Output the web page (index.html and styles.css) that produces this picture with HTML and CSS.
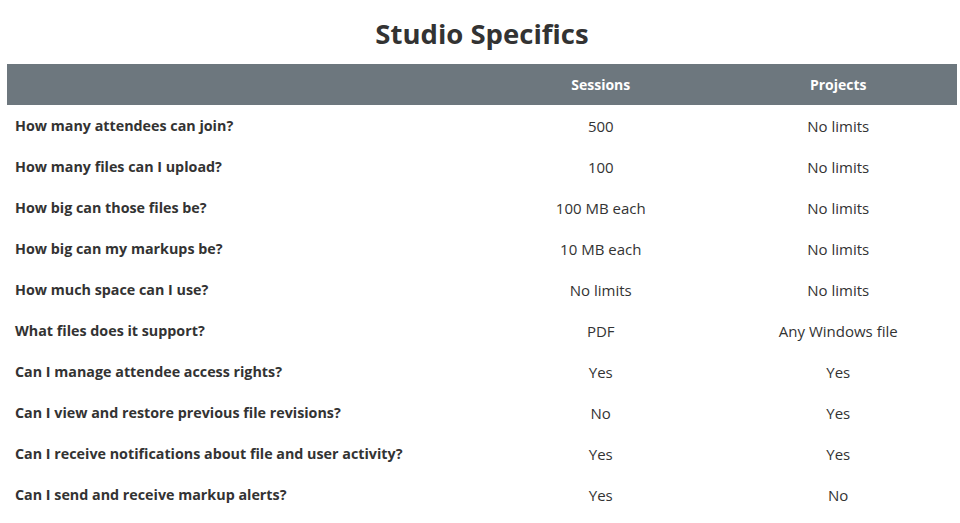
FILE: index.html
```html
<!DOCTYPE html>
<html>
<head>
<meta charset="utf-8">
<link rel="stylesheet" href="styles.css">
</head>
<body>
<div class="page">
  <h1 class="title">Studio Specifics</h1>
  <table class="specs">
    <thead>
      <tr><th class="q"></th><th>Sessions</th><th>Projects</th></tr>
    </thead>
    <tbody>
      <tr><td class="q">How many attendees can join?</td><td>500</td><td>No limits</td></tr>
      <tr><td class="q">How many files can I upload?</td><td>100</td><td>No limits</td></tr>
      <tr><td class="q">How big can those files be?</td><td>100 MB each</td><td>No limits</td></tr>
      <tr><td class="q">How big can my markups be?</td><td>10 MB each</td><td>No limits</td></tr>
      <tr><td class="q">How much space can I use?</td><td>No limits</td><td>No limits</td></tr>
      <tr><td class="q">What files does it support?</td><td>PDF</td><td>Any Windows file</td></tr>
      <tr><td class="q">Can I manage attendee access rights?</td><td>Yes</td><td>Yes</td></tr>
      <tr><td class="q">Can I view and restore previous file revisions?</td><td>No</td><td>Yes</td></tr>
      <tr><td class="q">Can I receive notifications about file and user activity?</td><td>Yes</td><td>Yes</td></tr>
      <tr><td class="q">Can I send and receive markup alerts?</td><td>Yes</td><td>No</td></tr>
    </tbody>
  </table>
</div>
</body>
</html>
```
FILE: styles.css
```css
html, body {
  margin: 0;
  padding: 0;
  background: #ffffff;
}
body {
  font-family: "Open Sans", "Noto Sans", "DejaVu Sans", sans-serif;
  color: #333333;
}
.page {
  margin-left: 7px;
  width: 950px;
}
.title {
  margin: 0;
  height: 64px;
  line-height: 68px;
  text-align: center;
  font-size: 27.5px;
  font-weight: 700;
  color: #333333;
}
.specs {
  width: 950px;
  border-collapse: collapse;
  table-layout: fixed;
}
.specs th {
  background: #6d777e;
  color: #ffffff;
  font-size: 14px;
  font-weight: 700;
  height: 41px;
  padding: 0;
  text-align: center;
  width: 25%;
}
.specs th.q {
  width: 50%;
}
.specs td {
  height: 41px;
  padding: 0;
  font-size: 15px;
  text-align: center;
  vertical-align: middle;
}
.specs td.q {
  text-align: left;
  padding-left: 8px;
  font-size: 14.3px;
  font-weight: 700;
}
```
